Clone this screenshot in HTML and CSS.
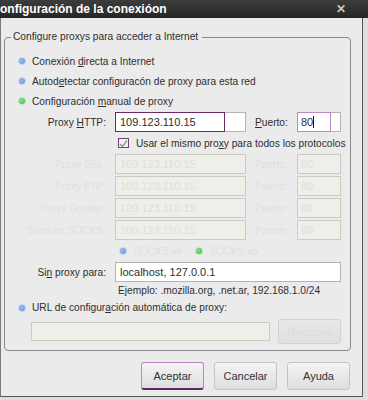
FILE: index.html
```html
<!DOCTYPE html>
<html lang="es">
<head>
    <meta charset="UTF-8">
    <title>Configuración de la conexión</title>
    <link rel="stylesheet" href="styles.css">
</head>
<body>
    <div class="titlebar">
        <span class="title">onfiguración de la conexióon</span>
        <span class="close">&#x2715;</span>
    </div>

    <div class="dialog">
        <fieldset class="group">
            <legend>Configure proxys para acceder a Internet</legend>

            <div class="radio-row"><span class="dot blue"></span><span>Conexión <u>d</u>irecta a Internet</span></div>
            <div class="radio-row"><span class="dot blue"></span><span>Autod<u>e</u>tectar configuracón de proxy para esta red</span></div>
            <div class="radio-row"><span class="dot green"></span><span>Configuración <u>m</u>anual de proxy</span></div>

            <div class="proxy-grid">
                <label class="lbl">Proxy <u>H</u>TTP:</label>
                <div class="field"><span class="focus-box">109.123.110.15</span></div>
                <label class="lbl-port"><u>P</u>uerto:</label>
                <div class="field port"><span class="focus-box light">80<i class="caret"></i></span></div>

                <div class="check-row">
                    <span class="checkbox">
                        <svg width="9" height="9" viewBox="0 0 9 9"><path d="M1 5 L3.5 7.5 L8 1.5" fill="none" stroke="#8a9a7a" stroke-width="1.4"/></svg>
                    </span>
                    <span>Usar el mismo pro<u>x</u>y para todos los protocolos</span>
                </div>

                <label class="lbl off">Proxy SSL:</label>
                <div class="field disabled">109.123.110.15</div>
                <label class="lbl-port off">Puerto:</label>
                <div class="field port disabled">80</div>

                <label class="lbl off">Proxy FTP:</label>
                <div class="field disabled">109.123.110.15</div>
                <label class="lbl-port off">Puerto:</label>
                <div class="field port disabled">80</div>

                <label class="lbl off">Proxy Gopher:</label>
                <div class="field disabled">109.123.110.15</div>
                <label class="lbl-port off">Puerto:</label>
                <div class="field port disabled">80</div>

                <label class="lbl off">Servidor SOCKS:</label>
                <div class="field disabled">109.123.110.15</div>
                <label class="lbl-port off">Puerto:</label>
                <div class="field port disabled">80</div>

                <div class="socks-row">
                    <span class="socks"><span class="dot blue"></span><span class="off">SOCKS v4</span></span>
                    <span class="socks"><span class="dot green"></span><span class="off">SOCKS v5</span></span>
                </div>

                <label class="lbl">Si<u>n</u> proxy para:</label>
                <div class="field wide">localhost, 127.0.0.1</div>

                <div class="hint">Ejemplo: .mozilla.org, .net.ar, 192.168.1.0/24</div>
            </div>

            <div class="radio-row url-radio"><span class="dot blue"></span><span>URL de configur<u>a</u>ción automática de proxy:</span></div>
            <div class="url-row">
                <div class="field disabled url"></div>
                <button class="btn reload" disabled>Recargar</button>
            </div>
        </fieldset>

        <div class="actions">
            <button class="btn default">Aceptar</button>
            <button class="btn">Cancelar</button>
            <button class="btn">Ayuda</button>
        </div>
    </div>
</body>
</html>
```

FILE: styles.css
```css
body {
    margin: 0;
    width: 368px;
    height: 400px;
    overflow: hidden;
    background: #dedede;
    font-family: 'Liberation Sans', Arial, sans-serif;
    font-size: 10.2px;
    color: #2e2e2e;
}
u {
    text-decoration-thickness: 1px;
    text-underline-offset: 1px;
}
.titlebar {
    height: 18px;
    display: flex;
    align-items: center;
    justify-content: space-between;
    padding-right: 22px;
    background: linear-gradient(#3d3d3d, #262626);
    color: #fff;
}
.title {
    font-weight: bold;
    font-size: 12px;
}
.close {
    color: #c8c8c8;
    font-size: 12px;
    font-weight: bold;
}
.dialog {
    width: 363px;
    height: 379px;
    background: #ebebeb;
    border-left: 1px solid #7a7a7a;
    border-right: 1px solid #555;
    border-bottom: 1px solid #555;
    box-sizing: border-box;
    padding-top: 12px;
}
.group {
    margin: 0 0 0 3px;
    width: 347px;
    box-sizing: border-box;
    border: 1px solid #8a8a8a;
    border-radius: 4px;
    padding: 7px 8px 6px 14px;
}
.group legend {
    padding: 0 4px 0 2px;
    margin-left: -8px;
    line-height: 14px;
}
.radio-row {
    height: 20px;
    display: flex;
    align-items: center;
}
.dot {
    width: 6px;
    height: 6px;
    border-radius: 50%;
    margin-right: 7px;
    flex: none;
}
.dot.blue {
    background: radial-gradient(circle at 40% 40%, #9dbdf0, #5d8de0);
    box-shadow: 0 0 0 1px #c8d8f0;
}
.dot.green {
    background: radial-gradient(circle at 40% 40%, #8de08d, #3cb53c);
    box-shadow: 0 0 0 1px #c0e8c0;
}
.proxy-grid {
    display: grid;
    grid-template-columns: 101px 131px 33px 44px;
    column-gap: 9px;
    row-gap: 2px;
    margin-left: -14px;
    margin-top: 1px;
}
.lbl {
    text-align: right;
    align-self: center;
}
.lbl-port {
    align-self: center;
}
.off {
    color: #e0e0da;
}
.field {
    height: 20px;
    box-sizing: border-box;
    border: 1px solid #b4b4b4;
    background: #fff;
    padding: 0 4px;
    line-height: 18px;
    font-size: 11px;
    position: relative;
}
.field.port {
    padding: 0 3px;
}
.focus-box {
    position: absolute;
    left: -1px;
    top: -1px;
    width: 110px;
    height: 20px;
    box-sizing: border-box;
    border: 1px solid #6a2a6a;
    padding-left: 4px;
}
.port .focus-box {
    width: 34px;
    padding-left: 3px;
}
.focus-box.light {
    border-color: #b88cc0;
}
.caret {
    display: inline-block;
    width: 1px;
    height: 12px;
    background: #111;
    vertical-align: -2px;
}
.field.disabled {
    background: #efeee9;
    border-color: #cbcbc4;
    color: #e0e0da;
}
.check-row {
    grid-column: 2 / 5;
    height: 18px;
    display: flex;
    align-items: center;
    margin-left: 3px;
    white-space: nowrap;
}
.checkbox {
    width: 11px;
    height: 10px;
    box-sizing: border-box;
    border: 1px solid #7a3a7a;
    background: #f4f0f4;
    margin-right: 7px;
    display: flex;
    align-items: center;
    justify-content: center;
    flex: none;
}
.socks-row {
    grid-column: 2 / 5;
    height: 18px;
    display: flex;
    align-items: center;
    padding-left: 5px;
}
.socks {
    display: flex;
    align-items: center;
    width: 76px;
}
.field.wide {
    grid-column: 2 / 5;
}
.hint {
    grid-column: 2 / 5;
    height: 15px;
    line-height: 14px;
    padding-left: 3px;
}
.url-radio {
    height: 17px;
}
.url-row {
    height: 25px;
    display: flex;
    align-items: center;
    gap: 8px;
    margin: 3px 0 0 12px;
}
.field.url {
    width: 239px;
    height: 19px;
}
.btn {
    font-family: inherit;
    font-size: 11px;
    color: #333;
    width: 63px;
    height: 28px;
    border: 1px solid #c4c4c4;
    border-radius: 3px;
    background: linear-gradient(#f4f4f4, #dedede);
    padding: 0;
}
.btn.reload {
    height: 25px;
    width: 63px;
    color: #dcdcdc;
    background: linear-gradient(#e8e8e8, #e0e0e0);
    border-color: #d0d0d0;
}
.btn.default {
    border: 1px solid #b68abc;
    border-bottom: 2px solid #5c2a62;
}
.actions {
    display: flex;
    justify-content: flex-end;
    gap: 10px;
    padding: 11px 12px 0 0;
}
```
